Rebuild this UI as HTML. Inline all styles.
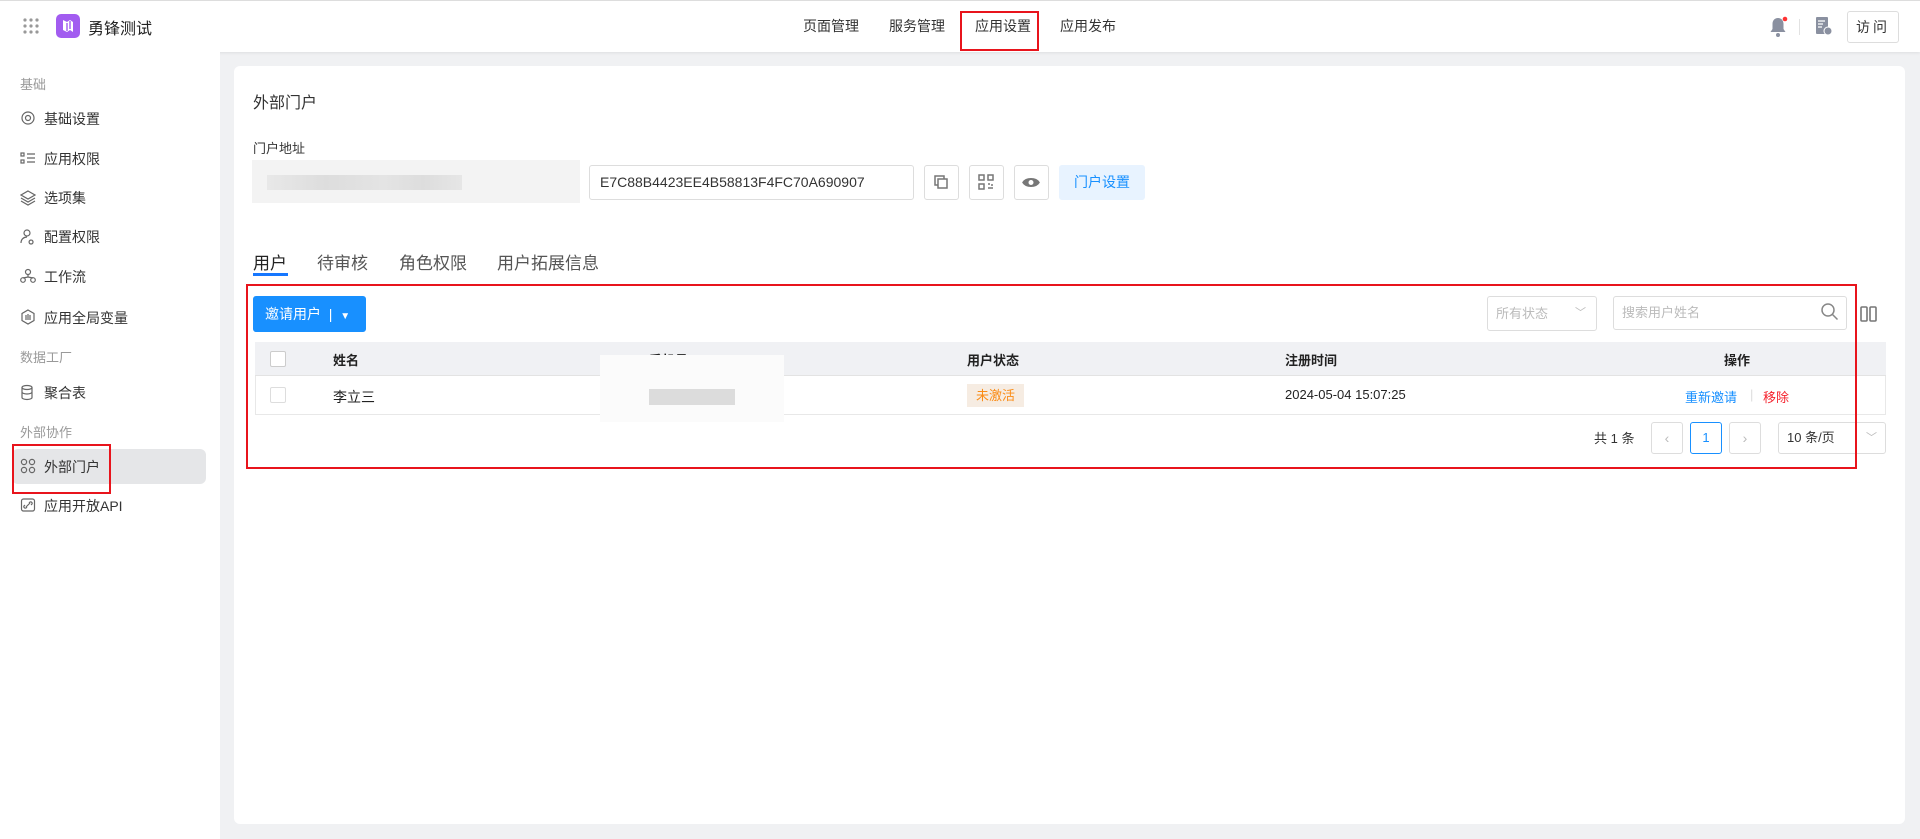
<!DOCTYPE html>
<html><head><meta charset="utf-8"><style>
*{box-sizing:border-box;margin:0;padding:0}
body{width:1920px;height:839px;overflow:hidden;background:#f0f1f3;font-family:"Liberation Sans","Noto Sans CJK SC",sans-serif;color:#333;position:relative;font-size:14px}
.a{position:absolute}
.hdr{left:0;top:0;width:1920px;height:52px;background:#fff;box-shadow:0 1px 3px rgba(0,0,0,.08);border-top:1px solid #ddd}
.side{left:0;top:52px;width:220px;height:787px;background:#fff}
.nav{top:16px;font-size:14px;color:#333}
.si{left:44px;font-size:14px;color:#333;line-height:18px}
.sg{left:20px;font-size:13px;color:#999}
.ic{left:21px;width:14px;height:14px}
.card{left:234px;top:66px;width:1671px;height:758px;background:#fff;border-radius:6px}
.tab{top:249px;font-size:17px;color:#555}
.red{border:2px solid #e8141c}
.btn{border:1px solid #ddd;border-radius:3px;background:#fff}
.th{top:350px;font-size:13px;font-weight:bold;color:#222}
.td{top:387px;font-size:13px;color:#222}
</style></head><body>
<div class="a hdr"></div>
<svg class="a" style="left:23px;top:18px" width="16" height="16"><g fill="#999"><circle cx="2" cy="2" r="1.6"/><circle cx="8" cy="2" r="1.6"/><circle cx="14" cy="2" r="1.6"/><circle cx="2" cy="8" r="1.6"/><circle cx="8" cy="8" r="1.6"/><circle cx="14" cy="8" r="1.6"/><circle cx="2" cy="14" r="1.6"/><circle cx="8" cy="14" r="1.6"/><circle cx="14" cy="14" r="1.6"/></g></svg>
<div class="a" style="left:56px;top:14px;width:24px;height:24px;border-radius:5px;background:#a25cf0"></div>
<svg class="a" style="left:56px;top:14px" width="24" height="24"><path d="M7 6 L11 8 L14 6 L17 8 L17 18 L14 16 L11 18 L7 16Z" fill="#fff"/><path d="M11 9v8M14 7v8" stroke="#a25cf0" stroke-width="1.4"/></svg>
<div class="a" style="left:88px;top:15px;font-size:16px;color:#222">勇锋测试</div>
<div class="a nav" style="left:803px">页面管理</div>
<div class="a nav" style="left:889px">服务管理</div>
<div class="a nav" style="left:975px">应用设置</div>
<div class="a nav" style="left:1060px">应用发布</div>
<div class="a red" style="left:960px;top:11px;width:79px;height:40px"></div>
<svg class="a" style="left:1768px;top:16px" width="20" height="22"><path d="M10 2c-3.5 0-5.5 2.5-5.5 6v5l-2 3h15l-2-3V8c0-3.5-2-6-5.5-6z" fill="#8a90a0"/><circle cx="10" cy="19" r="2" fill="#8a90a0"/><circle cx="17" cy="3" r="2.3" fill="#f33"/></svg>
<div class="a" style="left:1799px;top:19px;width:1px;height:16px;background:#e2e2e2"></div>
<svg class="a" style="left:1815px;top:16px" width="18" height="20"><rect x="1" y="1" width="12" height="17" rx="1" fill="#8a90a0"/><path d="M3 5h7M3 8h5M3 11h4" stroke="#fff" stroke-width="1.3"/><circle cx="13" cy="15" r="4" fill="#8a90a0" stroke="#fff"/></svg>
<div class="a btn" style="left:1847px;top:11px;width:52px;height:32px;font-size:14px;text-align:center;line-height:30px;letter-spacing:3px;color:#333">访问</div>

<div class="a side"></div>
<div class="a sg" style="top:74px">基础</div>
<div class="a si" style="top:110px">基础设置</div>
<div class="a si" style="top:150px">应用权限</div>
<div class="a si" style="top:189px">选项集</div>
<div class="a si" style="top:228px">配置权限</div>
<div class="a si" style="top:268px">工作流</div>
<div class="a si" style="top:309px">应用全局变量</div>
<div class="a sg" style="top:347px">数据工厂</div>
<div class="a si" style="top:384px">聚合表</div>
<div class="a sg" style="top:422px">外部协作</div>
<div class="a" style="left:12px;top:449px;width:194px;height:35px;background:#e5e6e8;border-radius:6px"></div>
<div class="a si" style="top:458px">外部门户</div>
<div class="a red" style="left:12px;top:444px;width:99px;height:50px"></div>
<div class="a si" style="top:497px">应用开放API</div>
<svg class="a" style="left:20px;top:110px" width="16" height="420" fill="none" stroke="#666" stroke-width="1.2">
<circle cx="8" cy="8" r="2.5"/><circle cx="8" cy="8" r="6"/>
<g transform="translate(0,40)"><rect x="1" y="3" width="3" height="3"/><rect x="1" y="10" width="3" height="3"/><path d="M7 4h8M7 8h8M7 12h8"/></g>
<g transform="translate(0,79)"><path d="M8 2L15 6L8 10L1 6Z M1 9l7 4 7-4M1 12l7 4 7-4"/></g>
<g transform="translate(0,118)"><circle cx="7" cy="5" r="3"/><path d="M1 15c0-4 3-6 6-6M11 12a2 2 0 1 0 .1 0"/></g>
<g transform="translate(0,158)"><circle cx="8" cy="4" r="2.5"/><circle cx="3" cy="12" r="2.3"/><circle cx="13" cy="12" r="2.3"/><path d="M8 7v2M3 10l5-1 5 1"/></g>
<g transform="translate(0,199)"><path d="M8 1l6 3.5v7L8 15l-6-3.5v-7Z M6 6v5M8 5v6M10 6v5"/></g>
<g transform="translate(0,274)"><ellipse cx="7" cy="3.5" rx="5" ry="2"/><path d="M2 3.5v10c0 1 2 2 5 2s5-1 5-2v-10M2 8c0 1 2 2 5 2s5-1 5-2"/></g>
<g transform="translate(0,348)"><circle cx="4" cy="4" r="2.6"/><circle cx="12" cy="4" r="2.6"/><circle cx="4" cy="12" r="2.6"/><circle cx="12" cy="12" r="2.6"/></g>
<g transform="translate(0,387)"><rect x="1.5" y="2" width="13" height="12" rx="2"/><path d="M6 10l4-4M5 8l-1 1a1.5 1.5 0 0 0 2 2l1-1M11 8l1-1a1.5 1.5 0 0 0-2-2l-1 1"/></g>
</svg>

<div class="a card"></div>
<div class="a" style="left:253px;top:89px;font-size:16px;color:#333">外部门户</div>
<div class="a" style="left:253px;top:138px;font-size:13px;color:#333">门户地址</div>
<div class="a" style="left:252px;top:160px;width:328px;height:43px;background:#f3f3f3"></div>
<div class="a" style="left:267px;top:175px;width:195px;height:15px;background:linear-gradient(90deg,#e8e8e8,#ddd 30%,#e4e4e4 60%,#ddd 80%,#e6e6e6)"></div>
<div class="a btn" style="left:589px;top:165px;width:325px;height:35px;padding-left:10px;line-height:33px;font-size:14px;color:#333">E7C88B4423EE4B58813F4FC70A690907</div>
<div class="a btn" style="left:924px;top:165px;width:35px;height:35px"></div>
<div class="a btn" style="left:969px;top:165px;width:35px;height:35px"></div>
<div class="a btn" style="left:1014px;top:165px;width:35px;height:35px"></div>
<svg class="a" style="left:924px;top:165px" width="130" height="35" fill="none" stroke="#777" stroke-width="1.5">
<rect x="11" y="11" width="9" height="9"/><rect x="14" y="14" width="9" height="9" fill="#fff"/>
<g transform="translate(45,0)"><rect x="10" y="10" width="5" height="5"/><rect x="19" y="10" width="5" height="5"/><rect x="10" y="19" width="5" height="5"/><path d="M19 19h2M23 19v2M19 23h5"/></g>
<g transform="translate(90,0)"><path d="M9 17.5c3-5 13-5 16 0c-3 5-13 5-16 0z" fill="#777"/><circle cx="17" cy="17.5" r="2.5" fill="#fff" stroke="none"/></g>
</svg>
<div class="a" style="left:1059px;top:165px;width:86px;height:35px;background:#e8f3ff;border-radius:3px;color:#1890ff;font-size:14px;text-align:center;line-height:35px">门户设置</div>

<div class="a tab" style="left:253px;color:#222">用户</div>
<div class="a" style="left:253px;top:273px;width:35px;height:3px;background:#1677ff"></div>
<div class="a tab" style="left:317px">待审核</div>
<div class="a tab" style="left:399px">角色权限</div>
<div class="a tab" style="left:497px">用户拓展信息</div>

<div class="a" style="left:253px;top:296px;width:113px;height:36px;background:#1890ff;border-radius:3px;color:#fff;font-size:14px;line-height:36px;padding-left:12px">邀请用户 &nbsp;|&nbsp; <span style="font-size:10px">▼</span></div>
<div class="a btn" style="left:1487px;top:296px;width:110px;height:35px;color:#bbb;font-size:13px;line-height:33px;padding-left:8px">所有状态<span style="position:absolute;right:10px;font-size:11px">﹀</span></div>
<div class="a btn" style="left:1613px;top:296px;width:234px;height:34px;color:#bbb;font-size:13px;line-height:32px;padding-left:8px">搜索用户姓名</div>
<svg class="a" style="left:1820px;top:302px" width="20" height="20" fill="none" stroke="#888" stroke-width="1.5"><circle cx="8" cy="8" r="6"/><path d="M12.5 12.5l5 5"/></svg>
<svg class="a" style="left:1860px;top:305px" width="18" height="18" fill="none" stroke="#777" stroke-width="1.6"><rect x="1" y="2" width="6" height="14" rx="1"/><rect x="10" y="2" width="6" height="14" rx="1"/></svg>

<div class="a" style="left:255px;top:342px;width:1631px;height:73px;border:1px solid #e8e8e8"></div>
<div class="a" style="left:255px;top:342px;width:1631px;height:34px;background:#f0f1f4;border-bottom:1px solid #e3e3e3"></div>
<div class="a" style="left:270px;top:351px;width:16px;height:16px;border:1px solid #ccc;background:#fff;border-radius:2px"></div>
<div class="a" style="left:270px;top:387px;width:16px;height:16px;border:1px solid #ddd;background:#fff;border-radius:2px"></div>
<div class="a th" style="left:333px">姓名</div>
<div class="a th" style="left:649px">手机号</div>
<div class="a th" style="left:967px">用户状态</div>
<div class="a th" style="left:1285px">注册时间</div>
<div class="a th" style="left:1724px">操作</div>
<div class="a" style="left:600px;top:355px;width:184px;height:67px;background:#fbfbfb"></div>
<div class="a" style="left:649px;top:389px;width:86px;height:16px;background:#dcdcdc"></div>
<div class="a td" style="left:333px;font-size:14px">李立三</div>
<div class="a" style="left:967px;top:384px;width:57px;height:23px;background:#f6ece2;color:#fa8c16;font-size:13px;line-height:23px;text-align:center">未激活</div>
<div class="a td" style="left:1285px">2024-05-04 15:07:25</div>
<div class="a td" style="left:1685px;color:#1890ff">重新邀请</div>
<div class="a td" style="left:1750px;color:#ddd">|</div>
<div class="a td" style="left:1763px;color:#f5222d">移除</div>

<div class="a" style="left:1594px;top:428px;font-size:13px">共 1 条</div>
<div class="a btn" style="left:1651px;top:422px;width:32px;height:32px;color:#bbb;text-align:center;line-height:30px">‹</div>
<div class="a" style="left:1690px;top:422px;width:32px;height:32px;border:1px solid #1890ff;border-radius:3px;color:#1890ff;text-align:center;line-height:30px;font-size:13px">1</div>
<div class="a btn" style="left:1729px;top:422px;width:32px;height:32px;color:#bbb;text-align:center;line-height:30px">›</div>
<div class="a btn" style="left:1778px;top:422px;width:108px;height:32px;font-size:13px;line-height:30px;padding-left:8px">10 条/页<span style="position:absolute;right:8px;color:#bbb;font-size:11px">﹀</span></div>

<div class="a red" style="left:246px;top:284px;width:1611px;height:185px"></div>
</body></html>
